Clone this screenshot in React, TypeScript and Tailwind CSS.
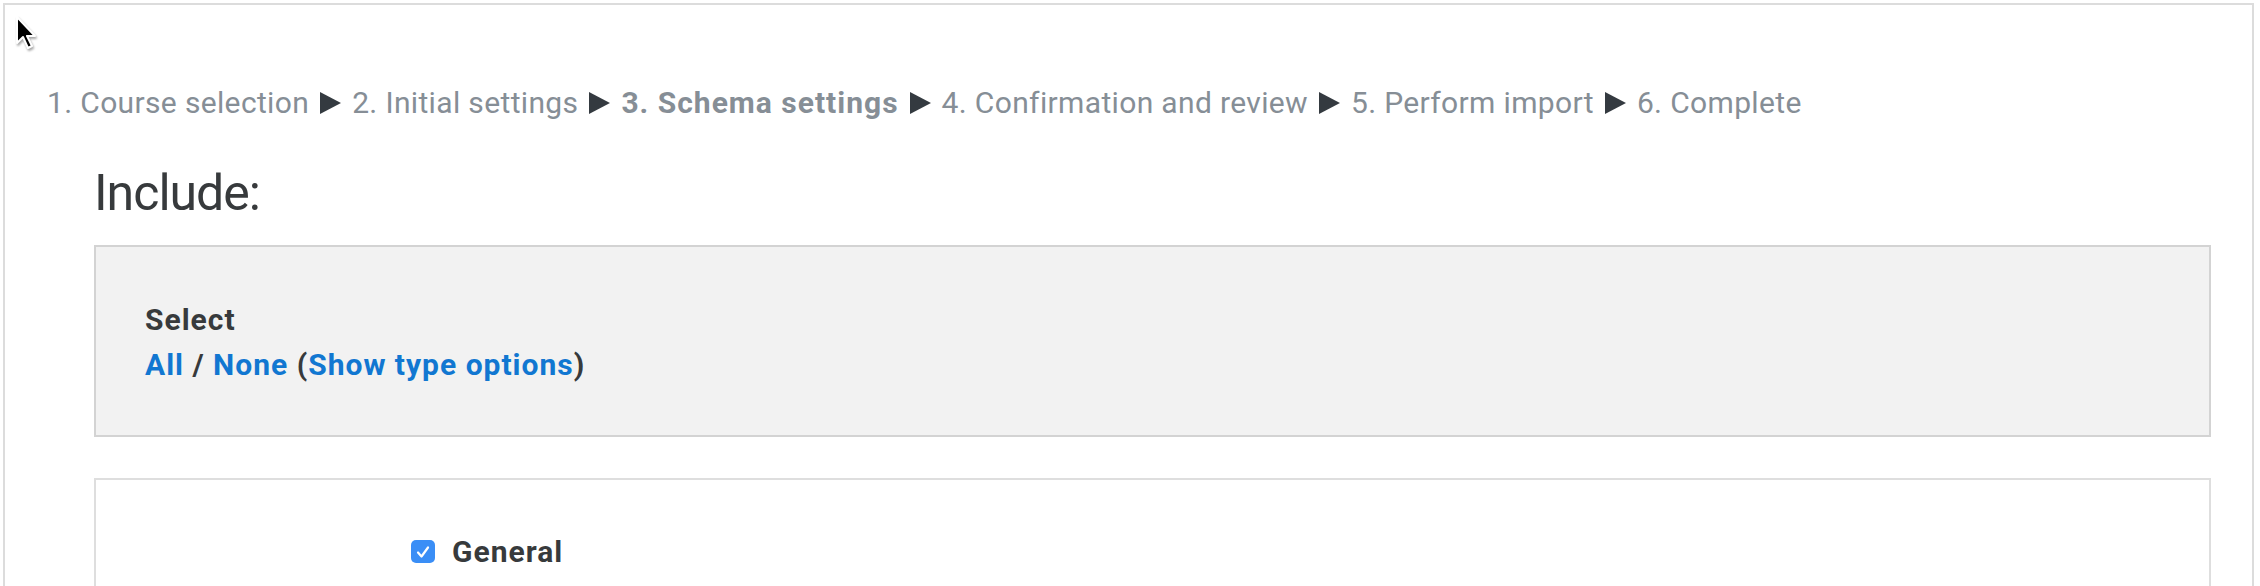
import React from "react";

// import wizard stages, the current one is bold
const stages = [
  "1. Course selection",
  "2. Initial settings",
  "3. Schema settings",
  "4. Confirmation and review",
  "5. Perform import",
  "6. Complete",
];
const current = 2;

function Arrow() {
  return (
    <svg className="mx-[11px] shrink-0" width="21" height="22" viewBox="0 0 21 22">
      <polygon points="0,0 21,11 0,22" fill="#343a40" />
    </svg>
  );
}

function Cursor() {
  return (
    <svg className="absolute left-[14px] top-[15px] drop-shadow-[1px_2px_1px_rgba(0,0,0,0.35)]" width="26" height="38" viewBox="0 0 26 38">
      <path d="M3 2 L3 28 L9 22 L14 33 L18 31 L13 21 L21 21 Z" fill="#000" stroke="#fff" strokeWidth="2" strokeLinejoin="round" />
    </svg>
  );
}

function Checkbox() {
  return (
    <span className="w-[24px] h-[23px] rounded-[5px] bg-[#3a8ef6] flex items-center justify-center shrink-0">
      <svg width="16" height="16" viewBox="0 0 16 16">
        <path d="M3 8.5 L6.5 12.5 L13 3.5" fill="none" stroke="#fff" strokeWidth="2.2" strokeLinecap="round" strokeLinejoin="round" />
      </svg>
    </span>
  );
}

export default function App() {
  return (
    <div className="relative h-[586px] overflow-hidden bg-white pt-[3px] pl-[3px] font-['Roboto',sans-serif]">
      <Cursor />

      {/* outer page region */}
      <div className="w-[2251px] h-[620px] border-2 border-[#dcdcdc]">

        {/* stage breadcrumb */}
        <div className="flex items-center pl-[42px] pt-[75px] text-[30px] leading-[45px] tracking-[0.35px] text-[#868e96] whitespace-nowrap">
          {stages.map((s, i) => (
            <React.Fragment key={s}>
              {i > 0 && <Arrow />}
              <span className={i === current ? "font-bold tracking-[1px]" : ""}>{s}</span>
            </React.Fragment>
          ))}
        </div>

        <div className="pl-[89px] w-[2206px]">
          <h2 className="mt-[32px] text-[50px] leading-[72px] font-normal tracking-[-1px] text-[#373a3c]">Include:</h2>

          {/* select all / none */}
          <div className="mt-[16px] h-[192px] border-2 border-[#d3d3d3] bg-[#f2f2f2] pl-[49px] pt-[50px] text-[30px] leading-[45px] font-bold tracking-[1px] text-[#373a3c]">
            <div>Select</div>
            <div>
              <a className="text-[#1177d1]">All</a> / <a className="text-[#1177d1]">None</a> (
              <a className="text-[#1177d1]">Show type options</a>)
            </div>
          </div>

          {/* schema items */}
          <div className="mt-[41px] h-[200px] border-2 border-[#dedede] bg-white pl-[315px] pt-[49px]">
            <label className="flex items-center gap-[17px] text-[30px] leading-[45px] font-bold tracking-[1px] text-[#373a3c]">
              <Checkbox />
              General
            </label>
          </div>
        </div>
      </div>
    </div>
  );
}
